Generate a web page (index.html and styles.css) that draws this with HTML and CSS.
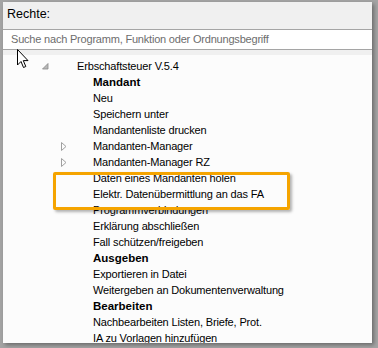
FILE: index.html
```html
<!DOCTYPE html>
<html>
<head>
<meta charset="utf-8">
<link rel="stylesheet" href="styles.css">
</head>
<body>
<div class="window">
  <div class="header">
    <div class="title">Rechte:</div>
    <div class="search">Suche nach Programm, Funktion oder Ordnungsbegriff</div>
  </div>
  <div class="tree">
    <div class="row l0"><span class="tog"><svg width="7" height="7" viewBox="0 0 7 7"><path d="M6 0.5 L6 6 L0.5 6 Z" fill="#b8b8b8" stroke="#8c8c8c" stroke-width="0.8"/></svg></span><span>Erbschaftsteuer V.5.4</span></div>
    <div class="row l1"><span class="tog"></span><b>Mandant</b></div>
    <div class="row l1"><span class="tog"></span><span>Neu</span></div>
    <div class="row l1"><span class="tog"></span><span>Speichern unter</span></div>
    <div class="row l1"><span class="tog"></span><span>Mandantenliste drucken</span></div>
    <div class="row l1"><span class="tog"><svg width="6" height="9" viewBox="0 0 6 9"><path d="M0.5 0.5 L5 4.5 L0.5 8.5 Z" fill="none" stroke="#a0a0a0" stroke-width="1"/></svg></span><span>Mandanten-Manager</span></div>
    <div class="row l1"><span class="tog"><svg width="6" height="9" viewBox="0 0 6 9"><path d="M0.5 0.5 L5 4.5 L0.5 8.5 Z" fill="none" stroke="#a0a0a0" stroke-width="1"/></svg></span><span>Mandanten-Manager RZ</span></div>
    <div class="row l1"><span class="tog"></span><span>Daten eines Mandanten holen</span></div>
    <div class="row l1"><span class="tog"></span><span>Elektr. Datenübermittlung an das FA</span></div>
    <div class="row l1"><span class="tog"></span><span>Programmverbindungen</span></div>
    <div class="row l1"><span class="tog"></span><span>Erklärung abschließen</span></div>
    <div class="row l1"><span class="tog"></span><span>Fall schützen/freigeben</span></div>
    <div class="row l1"><span class="tog"></span><b>Ausgeben</b></div>
    <div class="row l1"><span class="tog"></span><span>Exportieren in Datei</span></div>
    <div class="row l1"><span class="tog"></span><span>Weitergeben an Dokumentenverwaltung</span></div>
    <div class="row l1"><span class="tog"></span><b>Bearbeiten</b></div>
    <div class="row l1"><span class="tog"></span><span>Nachbearbeiten Listen, Briefe, Prot.</span></div>
    <div class="row l1"><span class="tog"></span><span>IA zu Vorlagen hinzufügen</span></div>
  </div>
  <div class="highlight"></div>
  <svg class="cursor" width="13" height="20" viewBox="0 0 13 20"><path d="M0.5 0.5 L0.5 16 L4 12.5 L6.5 18.5 L8.8 17.5 L6.3 11.6 L11 11.6 Z" fill="#fff" stroke="#000" stroke-width="1" stroke-linejoin="miter"/></svg>
</div>
</body>
</html>
```
FILE: styles.css
```css
html, body {
  margin: 0;
  padding: 0;
}
body {
  background: #a4a4a4;
  width: 378px;
  height: 348px;
  overflow: hidden;
  font-family: "Liberation Sans", Arial, sans-serif;
}
.window {
  position: relative;
  margin: 2px 6px 0 3px;
  height: 341px;
  background: #fcfcfc;
  box-shadow: 2px 2px 4px rgba(0, 0, 0, 0.35);
  overflow: hidden;
}
.header {
  background: #f0f0f0;
  padding-bottom: 5px;
}
.title {
  height: 27px;
  padding-left: 4px;
  font-size: 12.5px;
  line-height: 25px;
  color: #000;
}
.search {
  height: 19px;
  background: #fff;
  border-top: 1px solid #a5a5a5;
  border-bottom: 1px solid #a5a5a5;
  padding-left: 8px;
  font-size: 11px;
  letter-spacing: -0.2px;
  line-height: 19px;
  color: #6d6d6d;
}
.tree {
  padding-top: 3px;
  font-size: 11px;
  letter-spacing: -0.15px;
  color: #000;
}
.row {
  display: flex;
  align-items: center;
  height: 16px;
  white-space: nowrap;
}
.row b {
  font-weight: bold;
  font-size: 11.5px;
  letter-spacing: 0;
}
.l0 {
  padding-left: 39px;
}
.l0 .tog {
  width: 35px;
}
.l1 {
  padding-left: 58px;
}
.l1 .tog {
  width: 32px;
}
.tog {
  display: flex;
  align-items: center;
  height: 16px;
}
.highlight {
  position: absolute;
  left: 50px;
  top: 170px;
  width: 231px;
  height: 32px;
  border: 3px solid #f5a400;
  border-radius: 2px;
  box-shadow: 2px 2px 3px rgba(0, 0, 0, 0.3);
}
.cursor {
  position: absolute;
  left: 14px;
  top: 47px;
}
```
